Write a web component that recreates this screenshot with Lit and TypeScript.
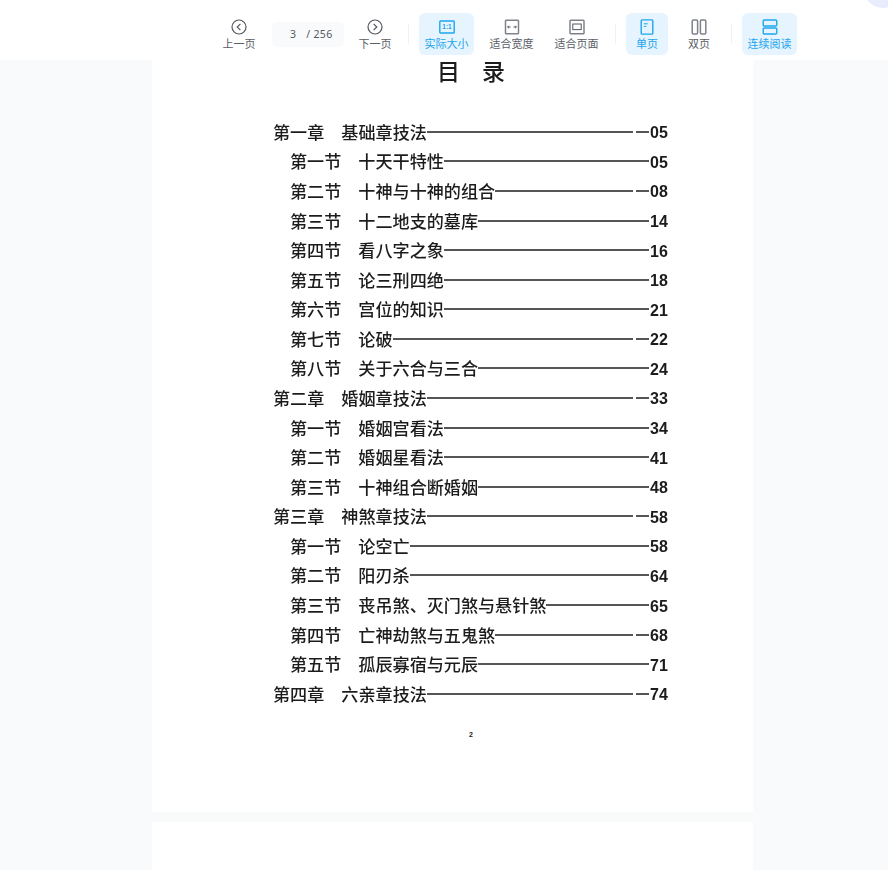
import { LitElement, html, css, svg } from "lit";
import { customElement } from "lit/decorators.js";

type Row = { t: string; n: string; ch?: boolean; gap?: boolean };
const rows: Row[] = [
  { t: "第一章\u3000基础章技法", n: "05", ch: true, gap: true },
  { t: "第一节\u3000十天干特性", n: "05" },
  { t: "第二节\u3000十神与十神的组合", n: "08", gap: true },
  { t: "第三节\u3000十二地支的墓库", n: "14" },
  { t: "第四节\u3000看八字之象", n: "16" },
  { t: "第五节\u3000论三刑四绝", n: "18" },
  { t: "第六节\u3000宫位的知识", n: "21" },
  { t: "第七节\u3000论破", n: "22", gap: true },
  { t: "第八节\u3000关于六合与三合", n: "24" },
  { t: "第二章\u3000婚姻章技法", n: "33", ch: true, gap: true },
  { t: "第一节\u3000婚姻宫看法", n: "34" },
  { t: "第二节\u3000婚姻星看法", n: "41" },
  { t: "第三节\u3000十神组合断婚姻", n: "48" },
  { t: "第三章\u3000神煞章技法", n: "58", ch: true, gap: true },
  { t: "第一节\u3000论空亡", n: "58" },
  { t: "第二节\u3000阳刃杀", n: "64" },
  { t: "第三节\u3000丧吊煞、灭门煞与悬针煞", n: "65" },
  { t: "第四节\u3000亡神劫煞与五鬼煞", n: "68", gap: true },
  { t: "第五节\u3000孤辰寡宿与元辰", n: "71" },
  { t: "第四章\u3000六亲章技法", n: "74", ch: true, gap: true },
];

const icons = {
  prev: svg`<circle cx="8" cy="8" r="7"/><path d="M9.4 4.8 6.2 8l3.2 3.2"/>`,
  next: svg`<circle cx="8" cy="8" r="7"/><path d="M6.6 4.8 9.8 8l-3.2 3.2"/>`,
  actual: svg`<rect x="0.8" y="2" width="14.4" height="12" rx="0.8" stroke-width="1.4"/><text x="8" y="10.4" text-anchor="middle" class="ico-text">1:1</text>`,
  width: svg`<rect x="1.5" y="1.2" width="13" height="13.6" rx="0.8" class="soft"/><path d="M3.6 8h3M9.4 8h3M4.8 6.8 3.6 8l1.2 1.2M11.2 6.8 12.4 8l-1.2 1.2" stroke-width="1"/>`,
  page: svg`<rect x="1" y="1.2" width="14" height="13.6" rx="0.8" class="soft"/><rect x="3.8" y="5" width="8.4" height="5.6" stroke-width="1"/>`,
  single: svg`<rect x="2.2" y="0.9" width="11.6" height="14.2" rx="0.8" stroke-width="1.4"/><path d="M4.8 4.8h4M4.8 7.4h2.6" stroke-width="1"/>`,
  double: svg`<rect x="1.2" y="1" width="5.4" height="14" rx="1.2" class="soft"/><rect x="9.4" y="1" width="5.4" height="14" rx="1.2" class="soft"/>`,
  scroll: svg`<rect x="1.2" y="1" width="13.6" height="6" rx="1.2" stroke-width="1.4"/><rect x="1.2" y="9" width="13.6" height="6" rx="1.2" stroke-width="1.4"/>`,
};

@customElement("app-root")
export class AppRoot extends LitElement {
  static styles = css`
    :host {
      display: block;
      width: 888px;
      height: 870px;
      overflow: hidden;
      position: relative;
      background: #f8fafc;
      font-family: "Noto Sans CJK SC", "Noto Sans", sans-serif;
    }
    .blob {
      position: absolute;
      right: -14px;
      top: -30px;
      width: 38px;
      height: 38px;
      border-radius: 50%;
      background: #e8ecfd;
    }
    .bar {
      height: 60px;
      box-sizing: border-box;
      padding: 8px 0 0 218px;
      display: flex;
      align-items: center;
      gap: 10px;
      background: #fff;
    }
    .btn {
      width: 42px;
      height: 42px;
      border-radius: 6px;
      box-sizing: border-box;
      display: flex;
      flex-direction: column;
      align-items: center;
      justify-content: flex-end;
      gap: 1px;
      padding-bottom: 5px;
      color: #5a5e66;
      font-size: 11px;
      line-height: 14px;
      white-space: nowrap;
    }
    .btn.wide { width: 55px; }
    .btn.on { background: #e5f4fe; color: #1ea5ee; }
    .btn svg {
      width: 16px;
      height: 16px;
      fill: none;
      stroke: #54585f;
      stroke-width: 1.2;
    }
    .btn svg .soft { stroke: #7f8289; stroke-width: 1.5; }
    .btn svg .ico-text {
      font-family: "Liberation Sans", sans-serif;
      font-size: 6.5px;
      font-weight: 700;
      fill: #1ea5ee;
      stroke: none;
    }
    .btn.on svg { stroke: #1ea5ee; }
    .pager {
      width: 72px;
      height: 25px;
      margin-left: 2px;
      border-radius: 5px;
      background: #f8fafc;
      color: #555a62;
      font-size: 10.5px;
      font-family: "Noto Sans", sans-serif;
      display: flex;
      align-items: center;
      box-sizing: border-box;
      padding-left: 18px;
      gap: 10px;
      letter-spacing: 0.3px;
    }
    .sep {
      width: 1px;
      height: 20px;
      background: #f0f1f3;
      margin: 0 0.5px;
    }
    .sep.first { margin-left: 1.5px; }
    .page {
      width: 601px;
      margin-left: 152px;
      height: 752px;
      background: #fff;
      box-sizing: border-box;
      color: #1c1c1c;
    }
    .title {
      height: 24px;
      padding-left: 285px;
      font-size: 23px;
      line-height: 20px;
      font-weight: 500;
      letter-spacing: 22px;
      filter: blur(0.3px);
    }
    .toc {
      margin-top: 33px;
      padding: 0 85px 0 121px;
      display: flex;
      flex-direction: column;
      filter: blur(0.3px);
    }
    .row {
      height: 29.58px;
      display: flex;
      align-items: center;
      font-size: 17.1px;
      font-weight: 500;
      white-space: nowrap;
      padding-left: 17px;
    }
    .row.ch { padding-left: 0; }
    .label { line-height: 20px; }
    .dash {
      flex: 1;
      height: 2px;
      background: #555;
    }
    .dash.tail {
      flex: 0 0 13px;
      margin-left: 3px;
    }
    .num {
      width: 18px;
      margin-left: 1px;
      font-family: "Liberation Sans", sans-serif;
      font-weight: 700;
      font-size: 16px;
      line-height: 20px;
      margin-top: 3px;
    }
    .folio {
      margin-top: 21px;
      padding-left: 317px;
      font-family: "Liberation Sans", sans-serif;
      font-size: 7px;
      font-weight: 700;
      line-height: 10px;
    }
    .page2 {
      width: 601px;
      margin-left: 152px;
      height: 60px;
      box-sizing: border-box;
      border-top: 10px solid #f9fbfb;
      background: #fff;
    }
  `;

  private btn(label: string, icon: unknown, opts = "") {
    return html`<div class="btn ${opts}">
      <svg viewBox="0 0 16 16">${icon}</svg><span>${label}</span>
    </div>`;
  }

  render() {
    return html`
      <div class="bar">
        ${this.btn("上一页", icons.prev)}
        <div class="pager"><span>3</span><span>/ 256</span></div>
        ${this.btn("下一页", icons.next)}
        <div class="sep first"></div>
        ${this.btn("实际大小", icons.actual, "wide on")}
        ${this.btn("适合宽度", icons.width, "wide")}
        ${this.btn("适合页面", icons.page, "wide")}
        <div class="sep"></div>
        ${this.btn("单页", icons.single, "on")}
        ${this.btn("双页", icons.double)}
        <div class="sep"></div>
        ${this.btn("连续阅读", icons.scroll, "wide on")}
      </div>
      <div class="blob"></div>
      <div class="page">
        <div class="title">目录</div>
        <div class="toc">
          ${rows.map(
            (r) => html`<div class="row ${r.ch ? "ch" : ""}">
              <span class="label">${r.t}</span>
              <span class="dash"></span>
              ${r.gap ? html`<span class="dash tail"></span>` : ""}
              <span class="num">${r.n}</span>
            </div>`
          )}
        </div>
        <div class="folio">2</div>
      </div>
      <div class="page2"></div>
    `;
  }
}
